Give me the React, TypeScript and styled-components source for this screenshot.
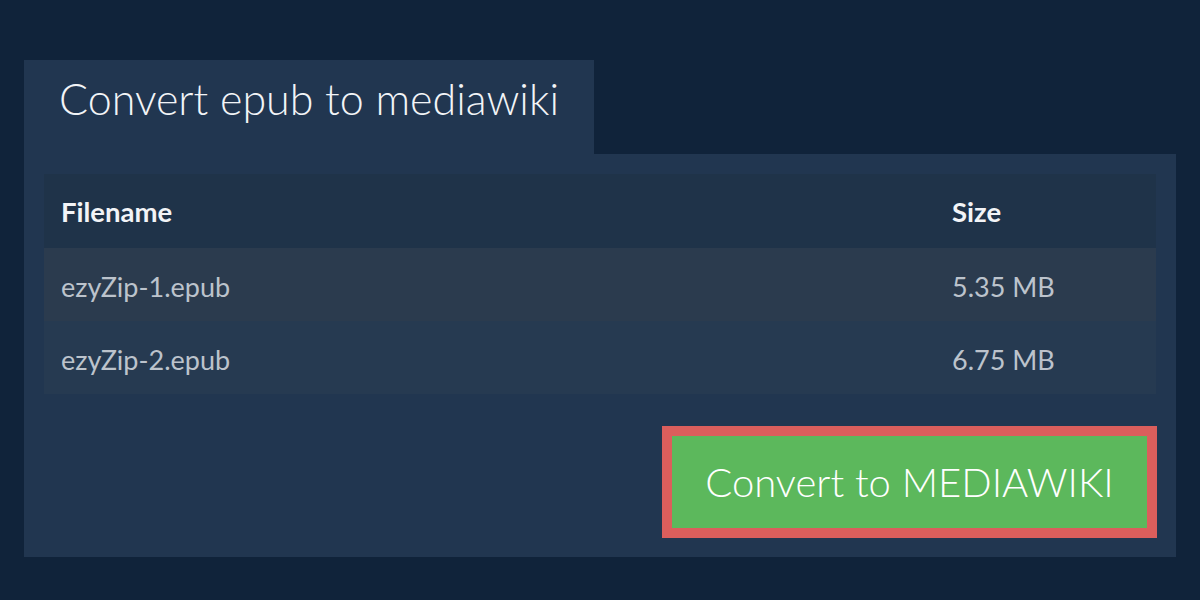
import styled, { createGlobalStyle } from "styled-components";

const GlobalStyle = createGlobalStyle`
  html, body {
    margin: 0;
    padding: 0;
    background-color: #10233a;
    font-family: Lato, "Open Sans", sans-serif;
  }
`;

const Page = styled.div`
  width: 1200px;
  height: 600px;
  box-sizing: border-box;
  padding: 60px 24px 0;
  background-color: #10233a;
`;

const Tab = styled.div`
  width: 570px;
  height: 94px;
  box-sizing: border-box;
  padding: 13px 0 0 35px;
  background-color: #213650;
`;

const Title = styled.h1`
  margin: 0;
  font-size: 43px;
  font-weight: 300;
  color: #f2f4f7;
`;

const Panel = styled.div`
  background-color: #213650;
  padding: 20px 20px 19px;
  display: flex;
  flex-direction: column;
  align-items: flex-end;
  gap: 32px;
`;

const Table = styled.table`
  width: 100%;
  border-collapse: collapse;
  font-size: 27px;
`;

const HeadCell = styled.th<{ $width?: number }>`
  text-align: left;
  height: 74px;
  box-sizing: border-box;
  padding: 0 0 0 17px;
  font-weight: 700;
  font-size: 27.5px;
  color: #f2f4f7;
  background-color: #1f3349;
  width: ${(p) => (p.$width ? `${p.$width}px` : "auto")};
`;

const Row = styled.tr<{ $odd: boolean }>`
  background-color: ${(p) => (p.$odd ? "#2b3b4e" : "#263a51")};
`;

const Cell = styled.td`
  height: 73px;
  box-sizing: border-box;
  padding: 3px 0 0 17px;
  color: #bcc3cc;
`;

const ConvertButton = styled.button`
  width: 495px;
  height: 112px;
  margin-right: -1px;
  box-sizing: border-box;
  border: 10px solid #db5e5c;
  background-color: #5cb85c;
  color: #ffffff;
  font-family: Lato, "Open Sans", sans-serif;
  font-size: 40px;
  font-weight: 300;
  cursor: pointer;
  padding: 0;
`;

const files = [
  { name: "ezyZip-1.epub", size: "5.35 MB" },
  { name: "ezyZip-2.epub", size: "6.75 MB" },
];

function App() {
  return (
    <>
      <GlobalStyle />
      <Page>
        <Tab>
          <Title>Convert epub to mediawiki</Title>
        </Tab>
        <Panel>
          <Table>
            <thead>
              <tr>
                <HeadCell $width={891}>Filename</HeadCell>
                <HeadCell>Size</HeadCell>
              </tr>
            </thead>
            <tbody>
              {files.map((file, i) => (
                <Row key={file.name} $odd={i % 2 === 0}>
                  <Cell>{file.name}</Cell>
                  <Cell>{file.size}</Cell>
                </Row>
              ))}
            </tbody>
          </Table>
          <ConvertButton>Convert to MEDIAWIKI</ConvertButton>
        </Panel>
      </Page>
    </>
  );
}

export default App;
